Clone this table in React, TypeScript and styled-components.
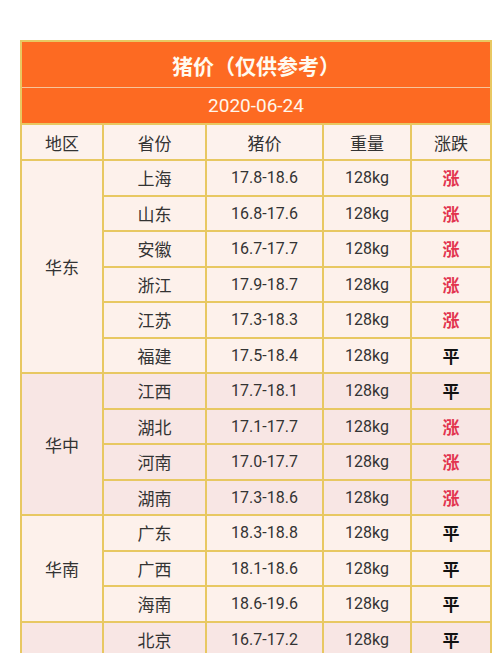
import React from 'react';
import styled, { createGlobalStyle } from 'styled-components';

const GlobalStyle = createGlobalStyle`
    body {
        margin: 0;
        background: #ffffff;
        font-family: Roboto, "Noto Sans CJK SC", sans-serif;
    }
`

const Page = styled.div`
    padding: 40px 0 0 20px;
    width: 470px;
`

const Table = styled.table`
    width: 470px;
    border-collapse: collapse;
    table-layout: fixed;
    border: 2px solid #e8c862;
`

const TitleCell = styled.th`
    height: 45px;
    background: #fd6a22;
    color: #fffaf0;
    font-size: 21px;
    font-weight: bold;
    text-align: center;
    border-bottom: 1.5px solid #f7c49a;
    padding: 0;
`

const DateCell = styled.th`
    height: 35px;
    background: #fd6a22;
    color: #fff6ec;
    font-size: 19px;
    font-weight: normal;
    text-align: center;
    padding: 0;
`

const HeadCell = styled.th`
    height: 34px;
    background: #fdf2ed;
    color: #333333;
    font-size: 17px;
    font-weight: normal;
    text-align: center;
    border: 2px solid #e8c862;
    padding: 0;
`

const Row = styled.tr<{ $alt?: boolean }>`
    height: 35.5px;
    background: ${p => (p.$alt ? '#f8e6e4' : '#fdf1eb')};
`

const Cell = styled.td<{ $num?: boolean }>`
    color: #333333;
    font-size: ${p => (p.$num ? '16px' : '17px')};
    text-align: center;
    border: 2px solid #e8c862;
    padding: 0;
`

const Trend = styled.td<{ $up?: boolean }>`
    color: ${p => (p.$up ? '#e2344f' : '#111111')};
    font-size: 17px;
    font-weight: bold;
    text-align: center;
    border: 2px solid #e8c862;
    padding: 0;
`

type Item = { province: string; price: string; up: boolean };
type Group = { region: string; items: Item[] };

// the last group runs past the bottom of the screen, its label sits lower
const groups: Group[] = [
    {
        region: '华东',
        items: [
            { province: '上海', price: '17.8-18.6', up: true },
            { province: '山东', price: '16.8-17.6', up: true },
            { province: '安徽', price: '16.7-17.7', up: true },
            { province: '浙江', price: '17.9-18.7', up: true },
            { province: '江苏', price: '17.3-18.3', up: true },
            { province: '福建', price: '17.5-18.4', up: false },
        ],
    },
    {
        region: '华中',
        items: [
            { province: '江西', price: '17.7-18.1', up: false },
            { province: '湖北', price: '17.1-17.7', up: true },
            { province: '河南', price: '17.0-17.7', up: true },
            { province: '湖南', price: '17.3-18.6', up: true },
        ],
    },
    {
        region: '华南',
        items: [
            { province: '广东', price: '18.3-18.8', up: false },
            { province: '广西', price: '18.1-18.6', up: false },
            { province: '海南', price: '18.6-19.6', up: false },
        ],
    },
    {
        region: '',
        items: [
            { province: '北京', price: '16.7-17.2', up: false },
        ],
    },
];

const App = () => {
    return (
        <>
            <GlobalStyle />
            <Page>
                <Table>
                    <colgroup>
                        <col style={{ width: 82 }} />
                        <col style={{ width: 103 }} />
                        <col style={{ width: 117 }} />
                        <col style={{ width: 88 }} />
                        <col style={{ width: 80 }} />
                    </colgroup>
                    <thead>
                        <tr>
                            <TitleCell colSpan={5}>猪价（仅供参考）</TitleCell>
                        </tr>
                        <tr>
                            <DateCell colSpan={5}>2020-06-24</DateCell>
                        </tr>
                        <tr>
                            <HeadCell>地区</HeadCell>
                            <HeadCell>省份</HeadCell>
                            <HeadCell>猪价</HeadCell>
                            <HeadCell>重量</HeadCell>
                            <HeadCell>涨跌</HeadCell>
                        </tr>
                    </thead>
                    <tbody>
                        {groups.map((g, gi) =>
                            g.items.map((it, i) => (
                                <Row key={gi + it.province} $alt={gi % 2 === 1}>
                                    {i === 0 && <Cell rowSpan={g.items.length}>{g.region}</Cell>}
                                    <Cell>{it.province}</Cell>
                                    <Cell $num>{it.price}</Cell>
                                    <Cell $num>128kg</Cell>
                                    <Trend $up={it.up}>{it.up ? '涨' : '平'}</Trend>
                                </Row>
                            ))
                        )}
                    </tbody>
                </Table>
            </Page>
        </>
    );
};

export default App;
